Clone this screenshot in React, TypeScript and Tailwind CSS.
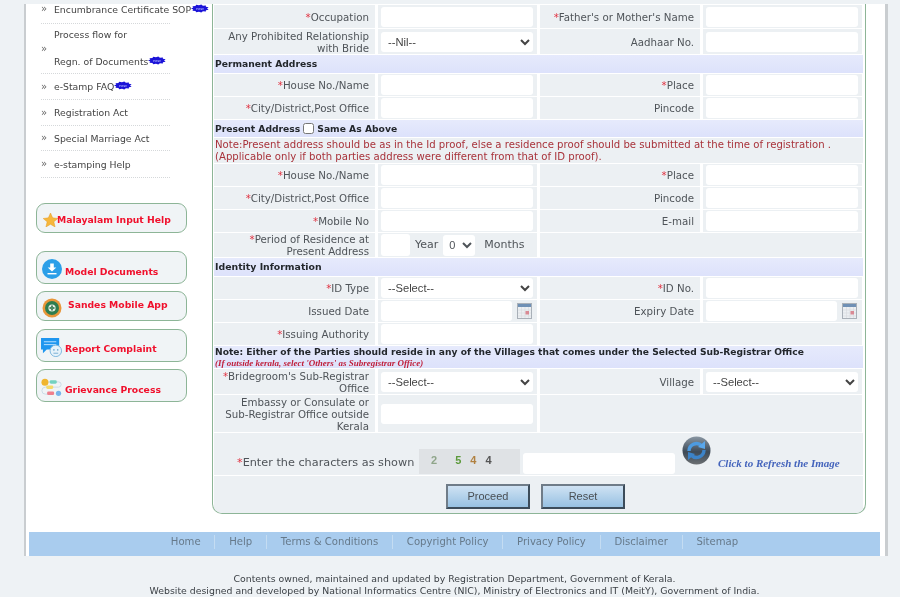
import React from "react";

const font = "font-['DejaVu_Sans',Verdana,sans-serif]";

function NewBadge() {
  const pts: string[] = [];
  const n = 22;
  for (let i = 0; i < n; i++) {
    const a = (i / n) * Math.PI * 2;
    const r = i % 2 ? 1 : 0.78;
    pts.push(`${10 + Math.cos(a) * 10 * r},${4.5 + Math.sin(a) * 4.5 * r}`);
  }
  return (
    <svg width="18" height="9" viewBox="0 0 20 9" className="inline-block shrink-0">
      <polygon points={pts.join(" ")} fill="#1c14d8" />
      <text x="10" y="6" textAnchor="middle" fontSize="4.5" fill="#c8d0ff" fontFamily="Liberation Sans">new</text>
    </svg>
  );
}

function SideItem({ h, children, extra }: { h: string; children: React.ReactNode; extra?: string }) {
  return (
    <li className={`${h} ${extra ?? ""} flex items-center border-b border-dotted border-[#d5d8da]`}>
      <span className="w-[13px] shrink-0 text-[10px] text-[#666] leading-none">»</span>
      <div className="text-[9.3px] text-[#444] leading-[25px]">{children}</div>
    </li>
  );
}

function SideBtn({ h, mt, icon, text, gap }: { h: string; mt: string; icon: React.ReactNode; text: string; gap: string }) {
  return (
    <div className={`${h} ${mt} w-[151px] flex items-center rounded-[9px] border border-[#8db597] bg-[#f0f4f6]`}>
      <span className="w-[28px] flex justify-center shrink-0">{icon}</span>
      <span className={`${gap} text-[9.25px] font-bold text-[#f0102c] whitespace-nowrap`}>{text}</span>
    </div>
  );
}

const Star = () => (
  <svg width="15" height="14" viewBox="0 0 24 23" className="-ml-[1px] mt-[3px]">
    <polygon points="12,0 15.5,8 24,9 17.5,14.5 19.5,23 12,18.5 4.5,23 6.5,14.5 0,9 8.5,8" fill="#f6b73c" stroke="#e49a20" strokeWidth="0.8" />
  </svg>
);
const Download = () => (
  <svg width="20" height="20" viewBox="0 0 20 20" className="ml-[1px] mt-[3px]">
    <circle cx="10" cy="10" r="10" fill="#2c9fe8" />
    <path d="M8.2 4.5h3.6v4h2.5L10 12.6 5.7 8.5h2.5z" fill="#fff" />
    <rect x="5.5" y="14" width="9" height="1.4" fill="#fff" />
  </svg>
);
const Sandes = () => (
  <svg width="20" height="20" viewBox="0 0 20 20" className="ml-[1px] mt-[4px]">
    <circle cx="10" cy="10" r="9.5" fill="#e8963a" />
    <circle cx="10" cy="10" r="7" fill="#2f7d4f" />
    <circle cx="10" cy="10" r="3.6" fill="#e8f0e6" />
    <rect x="9" y="7.5" width="2" height="5" fill="#4d8a66" />
    <rect x="7.5" y="9" width="5" height="2" fill="#4d8a66" />
  </svg>
);
const Complaint = () => (
  <svg width="22" height="21" viewBox="0 0 23 22" className="ml-[1px] mt-[3px]">
    <path d="M0 1h19v12H6l-4 4v-4H0z" fill="#1e96ef" />
    <path d="M3 5h13M3 8h13" stroke="#bfe3ff" strokeWidth="1" />
    <circle cx="15.5" cy="14.5" r="6" fill="#e6f2fa" stroke="#7db7dd" />
    <circle cx="13.5" cy="13.5" r="0.8" fill="#6aa6cf" />
    <circle cx="17.5" cy="13.5" r="0.8" fill="#6aa6cf" />
    <path d="M13 17h5" stroke="#6aa6cf" strokeWidth="0.9" />
  </svg>
);
const Grievance = () => (
  <svg width="21" height="22" viewBox="0 0 24 22" className="ml-[1px] mt-[5px]">
    <path d="M8 4h12a3 3 0 0 1 0 6H5a3.5 3.5 0 0 0 0 8h4" fill="none" stroke="#c7d8e4" strokeWidth="1" />
    <circle cx="4.5" cy="4.5" r="4" fill="#f0b52e" />
    <rect x="10" y="2" width="8" height="4" rx="1.5" fill="#74d2c0" />
    <rect x="6" y="8" width="8" height="4" rx="1.5" fill="#f5da6a" />
    <rect x="7" y="15" width="8" height="4" rx="1.5" fill="#ef7f8c" />
    <circle cx="20" cy="17" r="3" fill="#77b5ea" />
  </svg>
);
const Calendar = () => (
  <svg width="15" height="16" viewBox="0 0 15 16" className="shrink-0">
    <rect x="0.5" y="0.5" width="14" height="15" fill="#eceff2" stroke="#a9b0b8" />
    <rect x="1" y="1" width="13" height="3" fill="#6f90b5" />
    <path d="M1 7h13M1 10h13M1 13h13M4.5 4v11M8 4v11M11.5 4v11" stroke="#d6d9dd" strokeWidth="0.6" />
    <rect x="8.5" y="8" width="3.5" height="3.5" fill="#d98a94" />
  </svg>
);
const Refresh = () => (
  <svg width="29" height="29" viewBox="0 0 29 29">
    <defs>
      <linearGradient id="rf" x1="0" y1="0" x2="0" y2="1">
        <stop offset="0" stopColor="#8a97a3" />
        <stop offset="0.55" stopColor="#3d4a57" />
        <stop offset="1" stopColor="#6b6f72" />
      </linearGradient>
    </defs>
    <circle cx="14.5" cy="14.5" r="14" fill="url(#rf)" />
    <path d="M7 15a7.5 7.5 0 0 1 12.8-5.2" fill="none" stroke="#4d9be0" strokeWidth="3.4" />
    <path d="M22 14a7.5 7.5 0 0 1-12.8 5.2" fill="none" stroke="#3c83c8" strokeWidth="3.4" />
    <polygon points="23,5 23,13 16,11" fill="#5aa7ea" />
    <polygon points="6,24 6,16 13,18" fill="#3c83c8" />
  </svg>
);

const Req = () => <span className="text-[#e0303f]">*</span>;

function Label({ text, req }: { text: string; req?: boolean }) {
  return (
    <div className="bg-[#ecf0f3] flex items-center justify-end text-right px-[6px] text-[10.25px] leading-[12px] text-[#4f5459]">
      <div>
        {req && <Req />}
        {text}
      </div>
    </div>
  );
}

function Field({ children }: { children?: React.ReactNode }) {
  return <div className="bg-[#ecf0f3] flex items-center pl-[3px] pr-[4px]">{children}</div>;
}

const inputCls = "w-full h-[20px] bg-white rounded-[3px] outline-none";
const Input = () => <input className={inputCls} />;
const Sel = ({ v }: { v: string }) => (
  <select defaultValue={v} className="w-full h-[20px] bg-white rounded-[3px] text-[11.2px] font-['Liberation_Sans',sans-serif] text-[#444] pl-[3px]">
    <option>{v}</option>
  </select>
);

function Row({ h, cells }: { h: string; cells: React.ReactNode }) {
  return <div className={`${h} grid grid-cols-[161px_159px_160px_159px] gap-x-[3px]`}>{cells}</div>;
}

function Pair({ h, a, ar, b, br, av, bv }: { h: string; a: string; ar?: boolean; b?: string; br?: boolean; av?: React.ReactNode; bv?: React.ReactNode }) {
  return (
    <Row
      h={h}
      cells={
        <>
          <Label text={a} req={ar} />
          <Field>{av ?? <Input />}</Field>
          {!b && bv === null ? (
            <div className="col-span-2 bg-[#ecf0f3]" />
          ) : (
            <>
              <Label text={b ?? ""} req={br} />
              <Field>{bv ?? <Input />}</Field>
            </>
          )}
        </>
      }
    />
  );
}

function Section({ h, size, children }: { h: string; size: string; children: React.ReactNode }) {
  return (
    <div className={`${h} ${size} bg-gradient-to-b from-[#e6eafc] to-[#dde2fb] px-[1px] flex items-center font-bold text-[#23272c] whitespace-nowrap`}>
      {children}
    </div>
  );
}

const links = ["Home", "Help", "Terms & Conditions", "Copyright Policy", "Privacy Policy", "Disclaimer", "Sitemap"];

export default function App() {
  return (
    <div className={`${font} w-[900px] h-[597px] overflow-hidden bg-[#eef2f5] blur-[0.4px]`}>
      <div className="h-[4px]" />
      <div className="ml-[24px] w-[864px] h-[552px] bg-white border-l-2 border-r-[3px] border-[#c9cdd0] flex flex-col">
        <div className="flex h-[510px]">
          <aside className="w-[186px] shrink-0 pl-[15px] mt-[-4px]">
            <ul className="w-[129px]">
              <SideItem h="h-[24px]" extra="pb-[5px]">
                <span className="flex items-center whitespace-nowrap">Encumbrance Certificate SOP<span className="mb-[4px]"><NewBadge /></span></span>
              </SideItem>
              <SideItem h="h-[50px]">
                <div>Process flow for</div>
                <span className="flex items-center whitespace-nowrap">Regn. of Documents<span className="mb-[3px]"><NewBadge /></span></span>
              </SideItem>
              <SideItem h="h-[26px]">
                <span className="flex items-center whitespace-nowrap">e-Stamp FAQ<span className="mb-[4px]"><NewBadge /></span></span>
              </SideItem>
              <SideItem h="h-[26px]">Registration Act</SideItem>
              <SideItem h="h-[25px]">Special Marriage Act</SideItem>
              <SideItem h="h-[27px]">e-stamping Help</SideItem>
            </ul>
            <div className="-ml-[5px]">
              <SideBtn h="h-[30px]" mt="mt-[25px]" icon={<Star />} gap="-ml-[8px] mt-[3px]" text="Malayalam Input Help" />
              <SideBtn h="h-[33px]" mt="mt-[18px]" icon={<Download />} gap="mt-[8px]" text="Model Documents" />
              <SideBtn h="h-[30px]" mt="mt-[7px]" icon={<Sandes />} gap="ml-[3px] -mt-[2px]" text="Sandes Mobile App" />
              <SideBtn h="h-[33px]" mt="mt-[8px]" icon={<Complaint />} gap="mt-[6px]" text="Report Complaint" />
              <SideBtn h="h-[33px]" mt="mt-[7px]" icon={<Grievance />} gap="mt-[8px]" text="Grievance Process" />
            </div>
          </aside>
          <main className="w-[654px] h-[510px] border-l border-r border-b border-[#8db597] rounded-b-[10px] pl-[1px] pr-[2px] pt-[1px] flex flex-col gap-px overflow-hidden">
            <Pair h="h-[23px]" a="Occupation" ar b="Father's or Mother's Name" br />
            <Pair h="h-[25px]" a="Any Prohibited Relationship with Bride" av={<Sel v="--Nil--" />} b="Aadhaar No." />
            <Section h="h-[18px]" size="text-[9.2px]">Permanent Address</Section>
            <Pair h="h-[22px]" a="House No./Name" ar b="Place" br />
            <Pair h="h-[22px]" a="City/District,Post Office" ar b="Pincode" />
            <Section h="h-[17px]" size="text-[9.2px]">
              Present Address
              <input type="checkbox" className="w-[11px] h-[11px] mx-[3px]" />
              Same As Above
            </Section>
            <div className="h-[25px] bg-[#ecf0f3] px-[1px] text-[#a8323a] text-[10.15px] leading-[12px] whitespace-nowrap flex flex-col justify-center">
              <div>Note:Present address should be as in the Id proof, else a residence proof should be submitted at the time of registration .</div>
              <div>(Applicable only if both parties address were different from that of ID proof).</div>
            </div>
            <Pair h="h-[22px]" a="House No./Name" ar b="Place" br />
            <Pair h="h-[22px]" a="City/District,Post Office" ar b="Pincode" />
            <Pair h="h-[22px]" a="Mobile No" ar b="E-mail" />
            <Pair
              h="h-[24px]"
              a="Period of Residence at Present Address"
              ar
              av={
                <div className="flex items-center text-[11px] text-[#4f5459] whitespace-nowrap">
                  <input className="w-[29px] h-[22px] bg-white rounded-[3px] outline-none" />
                  <span className="ml-[5px]">Year</span>
                  <select defaultValue="0" className="ml-[5px] w-[32px] h-[21px] bg-white rounded-[3px] text-[11px] font-['Liberation_Sans',sans-serif] pl-[2px]">
                    <option>0</option>
                  </select>
                  <span className="ml-[9px]">Months</span>
                </div>
              }
              bv={null}
            />
            <Section h="h-[18px]" size="text-[9.35px]">Identity Information</Section>
            <Pair h="h-[22px]" a="ID Type" ar av={<Sel v="--Select--" />} b="ID No." br />
            <Pair
              h="h-[22px]"
              a="Issued Date"
              av={
                <div className="flex items-center gap-[5px] w-[152px]">
                  <input className="w-[131px] h-[20px] bg-white rounded-[3px] outline-none shrink-0" />
                  <Calendar />
                </div>
              }
              b="Expiry Date"
              bv={
                <div className="flex items-center gap-[5px] w-[152px]">
                  <input className="w-[131px] h-[20px] bg-white rounded-[3px] outline-none shrink-0" />
                  <Calendar />
                </div>
              }
            />
            <Pair h="h-[22px]" a="Issuing Authority" ar bv={null} />
            <div className="h-[22px] bg-gradient-to-b from-[#e6eafc] to-[#dde2fb] px-[1px] flex flex-col justify-center whitespace-nowrap">
              <div className="text-[9.15px] leading-[11px] font-bold text-[#23272c]">Note: Either of the Parties should reside in any of the Villages that comes under the Selected Sub-Registrar Office</div>
              <div className="text-[9px] leading-[10px] font-bold italic text-[#c0203c] font-['Liberation_Serif',serif]">(If outside kerala, select 'Others' as Subregistrar Office)</div>
            </div>
            <Pair h="h-[25px]" a="Bridegroom's Sub-Registrar Office" ar av={<Sel v="--Select--" />} b="Village" bv={<Sel v="--Select--" />} />
            <Pair h="h-[37px]" a="Embassy or Consulate or Sub-Registrar Office outside Kerala" bv={null} />
            <div className="h-[42px] bg-[#ecf0f3] flex items-end pb-[1px] whitespace-nowrap">
              <div className="ml-[23px] w-[182px] text-[11.25px] text-[#4f5459] mb-[2px]">
                <Req />Enter the characters as shown
              </div>
              <div className="w-[101px] h-[25px] bg-[#dfe2e5] text-[11px] flex items-center pl-[12px] pb-[3px] font-['Liberation_Sans',sans-serif] font-bold">
                <span className="text-[#8fa58a]">2</span>
                <span className="text-[#5c9a3c] ml-[18px]">5</span>
                <span className="text-[#b08040] ml-[9px]">4</span>
                <span className="text-[#555] ml-[9px]">4</span>
              </div>
              <input className="ml-[3px] w-[152px] h-[21px] bg-white rounded-[3px] outline-none" />
              <div className="ml-[7px] mb-[9px]"><Refresh /></div>
              <div className="ml-[7px] mb-[3px] text-[11px] font-bold italic text-[#4464bc] font-['Liberation_Serif',serif]">Click to Refresh the Image</div>
            </div>
            <div className="h-[37px] bg-[#ecf0f3] flex items-center justify-center gap-[11px] pr-[6px] pt-[4px] font-['Liberation_Sans',sans-serif] text-[11px] text-[#4a4f54]">
              <button className="w-[84px] h-[25px] border-2 border-t-[#6f7c88] border-l-[#6f7c88] border-r-[#3c4c5a] border-b-[#3c4c5a] bg-gradient-to-b from-[#cfe2f3] to-[#97c1e2]">Proceed</button>
              <button className="w-[84px] h-[25px] border-2 border-t-[#6f7c88] border-l-[#6f7c88] border-r-[#3c4c5a] border-b-[#3c4c5a] bg-gradient-to-b from-[#cfe2f3] to-[#97c1e2]">Reset</button>
            </div>
          </main>
        </div>
        <div className="mt-auto ml-[3px] w-[851px] h-[24px] bg-[#a9ccee] flex items-start justify-center pt-[3px]">
          {links.map((l, i) => (
            <span key={l} className={`px-[13.8px] h-[14px] flex items-center text-[10.1px] text-[#66798a] whitespace-nowrap ${i < links.length - 1 ? "border-r border-[#c4dcf2]" : ""}`}>
              {l}
            </span>
          ))}
        </div>
      </div>
      <div className="mt-[17px] pl-[9px] text-center text-[9.35px] leading-[12px] text-[#3a3f44]">
        <div>Contents owned, maintained and updated by Registration Department, Government of Kerala.</div>
        <div>Website designed and developed by National Informatics Centre (NIC), Ministry of Electronics and IT (MeitY), Government of India.</div>
      </div>
    </div>
  );
}
